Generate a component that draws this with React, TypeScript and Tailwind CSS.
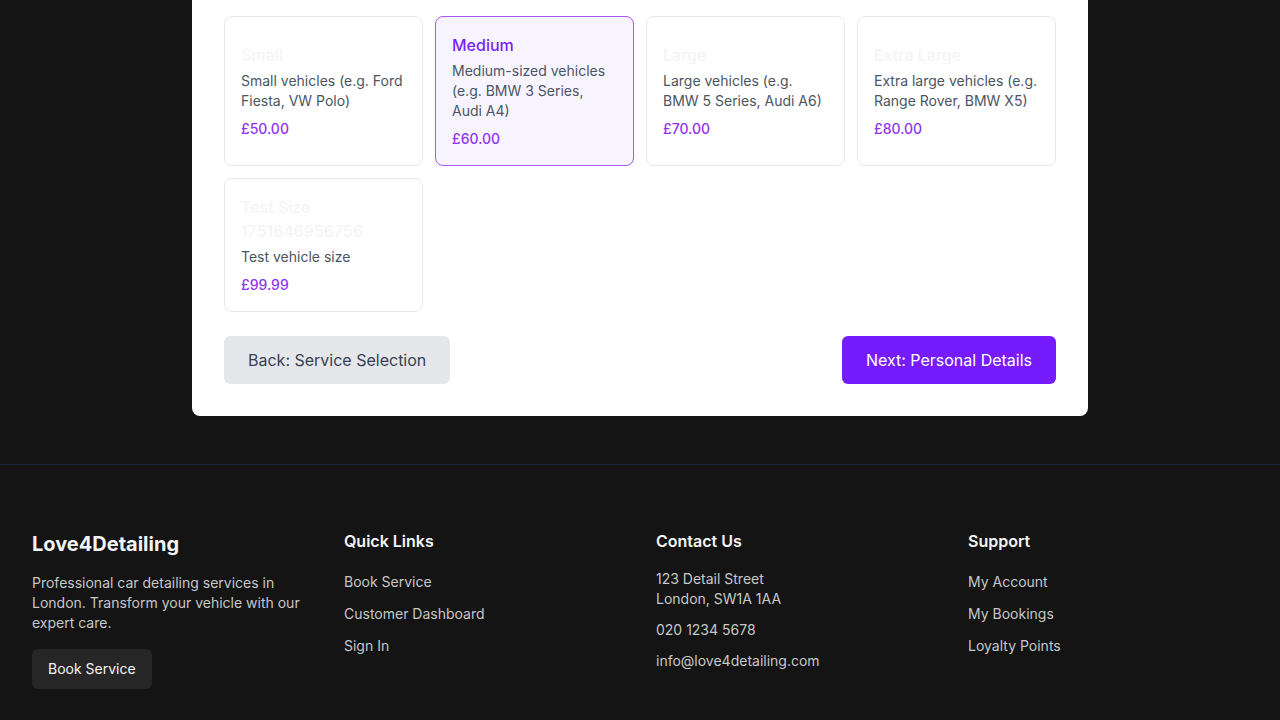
import React from "react";

const sizes = [
  { name: "Small", desc: "Small vehicles (e.g. Ford Fiesta, VW Polo)", price: "£50.00", selected: false },
  { name: "Medium", desc: "Medium-sized vehicles (e.g. BMW 3 Series, Audi A4)", price: "£60.00", selected: true },
  { name: "Large", desc: "Large vehicles (e.g. BMW 5 Series, Audi A6)", price: "£70.00", selected: false },
  { name: "Extra Large", desc: "Extra large vehicles (e.g. Range Rover, BMW X5)", price: "£80.00", selected: false },
  { name: "Test Size 1751646956756", desc: "Test vehicle size", price: "£99.99", selected: false },
];

export default function App() {
  return (
    <div className="min-h-screen bg-[#141414] font-['Inter','Noto_Sans',sans-serif]">
      <main className="flex justify-center">
        <div className="w-[896px] bg-white rounded-b-lg px-8 pt-4 pb-8">
          <div className="grid grid-cols-4 gap-3">
            {sizes.map((s) => (
              <div
                key={s.name}
                className={
                  "flex flex-col justify-center rounded-lg border p-4 " +
                  (s.selected ? "border-[#a35af7] bg-[#f8f4ff]" : "border-[#e5e7eb] bg-white")
                }
              >
                <div
                  className={
                    "text-base leading-6 font-medium mb-1 " +
                    (s.selected ? "text-[#7a1ff5]" : "text-[#f3f4f6]")
                  }
                >
                  {s.name}
                </div>
                <div className="text-sm leading-5 text-[#4b5563]">{s.desc}</div>
                <div className="mt-2 text-sm leading-5 font-medium text-[#9035f0]">{s.price}</div>
              </div>
            ))}
          </div>
          <div className="mt-6 flex justify-between">
            <button className="h-12 px-6 rounded-md bg-[#e5e7eb] text-[#374151] text-base">
              Back: Service Selection
            </button>
            <button className="h-12 px-6 rounded-md bg-[#761bfe] text-white text-base">
              Next: Personal Details
            </button>
          </div>
        </div>
      </main>
      <footer className="mt-12 border-t border-[#1c2433]">
        <div className="grid grid-cols-4 gap-8 px-8 pt-16 pb-16">
          <div>
            <div className="text-xl leading-7 font-bold text-[#f3f4f6] mt-px">Love4Detailing</div>
            <p className="mt-[15px] text-sm leading-5 text-[#c7c7c7]">
              Professional car detailing services in London. Transform your vehicle with our expert care.
            </p>
            <button className="mt-4 h-10 px-4 rounded-md bg-[#262626] text-sm text-[#f3f4f6]">
              Book Service
            </button>
          </div>
          <div>
            <div className="text-base leading-6 font-semibold text-[#f3f4f6]">Quick Links</div>
            <ul className="mt-[17px] space-y-2 text-sm leading-6 text-[#c7c7c7]">
              <li>Book Service</li>
              <li>Customer Dashboard</li>
              <li>Sign In</li>
            </ul>
          </div>
          <div>
            <div className="text-base leading-6 font-semibold text-[#f3f4f6]">Contact Us</div>
            <div className="mt-4 space-y-[11px] text-sm leading-5 text-[#c7c7c7]">
              <p>
                123 Detail Street
                <br />
                London, SW1A 1AA
              </p>
              <p>020 1234 5678</p>
              <p>info@love4detailing.com</p>
            </div>
          </div>
          <div>
            <div className="text-base leading-6 font-semibold text-[#f3f4f6]">Support</div>
            <ul className="mt-[17px] space-y-2 text-sm leading-6 text-[#c7c7c7]">
              <li>My Account</li>
              <li>My Bookings</li>
              <li>Loyalty Points</li>
            </ul>
          </div>
        </div>
      </footer>
    </div>
  );
}
